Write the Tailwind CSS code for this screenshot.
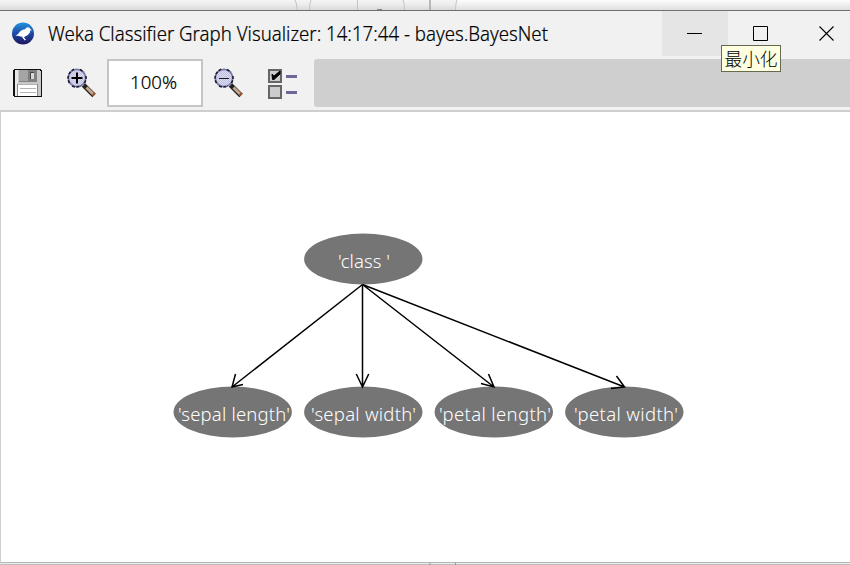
<!DOCTYPE html>
<html lang="en">
<head>
<meta charset="utf-8">
<title>Weka Classifier Graph Visualizer</title>
<script src="https://cdn.jsdelivr.net/npm/@tailwindcss/browser@4"></script>
</head>
<body class="w-[850px] h-[565px] overflow-hidden bg-[#f1f1f1] font-['Noto_Sans','Noto_Sans_CJK_SC',sans-serif] text-black">
<div class="relative flex flex-col w-[850px] h-[565px]">
  <!-- window behind -->
  <svg class="block shrink-0" width="850" height="10" viewBox="0 0 850 10">
    <defs><linearGradient id="top" x1="0" y1="0" x2="0" y2="1"><stop offset="0" stop-color="#f4f4f5"/><stop offset=".4" stop-color="#eeeeef"/><stop offset="1" stop-color="#d9d9da"/></linearGradient>
    <linearGradient id="right" x1="0" y1="0" x2="0" y2="1"><stop offset="0" stop-color="#fdfdfd"/><stop offset="1" stop-color="#dfdfdf"/></linearGradient></defs>
    <rect width="850" height="10" fill="url(#top)"/>
    <path d="M455 10V4L457 0H850V10Z" fill="url(#right)"/>
    <path d="M295 0Q297 3 297 10M311 0Q309.500 3 309.500 10M357.500 0V10M403 0Q404.500 3 404.500 10M457 0Q455.500 3 455.500 10" fill="none" stroke="#c3c3c5"/>
    <path d="M430 0V10" stroke="#a6a6a8" stroke-width="1.500"/><path d="M377 9.500H382" stroke="#888"/>
  </svg>
  <header class="flex shrink-0 h-[46px] border-t border-[#717171] bg-[#f1f1f1]">
    <div class="flex w-[662px] items-center pl-3">
      <svg class="block shrink-0" width="23" height="23" viewBox="0 0 23 23">
        <defs><linearGradient id="logo" x1="0" y1="0" x2="0" y2="1"><stop offset="0" stop-color="#2493df"/><stop offset=".5" stop-color="#1b4aa5"/><stop offset="1" stop-color="#20145b"/></linearGradient></defs>
        <circle cx="11" cy="11.500" r="11" fill="url(#logo)"/>
        <path d="M3.500 14L6 12L8.500 9Q10.500 7.300 13 7.300Q14 5.300 16 5.300Q18 5.500 18.200 7L20 8.300L18.300 8.500Q18.300 11.500 15.500 13.300L13 14.500L12 15.700L14 17.600L12.800 18.500L10.300 15.600L10.500 14.700Q8 14.700 6.500 13.700Z" fill="#fff"/>
      </svg>
      <svg class="block shrink-0 ml-3 overflow-visible" width="504" height="34"><text x="1" y="24" font-size="19.500" font-weight="300" stroke="#000" stroke-width=".2" textLength="500" lengthAdjust="spacingAndGlyphs">Weka Classifier Graph Visualizer: 14:17:44 - bayes.BayesNet</text></svg>
    </div>
    <div class="flex w-[66px] items-center justify-center bg-[#e5e5e5]"><svg width="16" height="16"><path d="M0 7.500H15" stroke="#000"/></svg></div>
    <div class="flex w-[66px] items-center justify-center"><svg width="16" height="16"><path d="M.5 .5H14.500V14.500H.5Z" fill="none" stroke="#000"/></svg></div>
    <div class="flex w-[56px] items-center pl-[25px]"><svg width="16" height="16"><path d="M.5 .5L14.500 14.500M14.500 .5L.5 14.500" fill="none" stroke="#000" stroke-width="1.100"/></svg></div>
  </header>
  <div class="flex shrink-0 h-[54px] items-start bg-[#f1f1f1]">
    <svg class="block shrink-0 mt-[13px] ml-[13px]" width="29" height="28" viewBox="0 0 29 28" shape-rendering="crispEdges">
      <path d="M1 0H27L29 2V28H1L0 27V1Z" fill="#111"/>
      <path d="M2 1H26L28 3V27H2Z" fill="#c8c8c8"/>
      <path d="M2 1H5V27H2Z" fill="#e8e8e8"/><path d="M6 1H24V13H6Z" fill="#808080"/><path d="M6 1H15V12H6Z" fill="#a5a5a5"/><path d="M17 3H21V10H17Z" fill="#444"/><path d="M18 4H21V10H18Z" fill="#d9d9d9"/>
      <path d="M5 15H25V27H5Z" fill="#fff"/><path d="M5 15.500H25M7 19.500H23M7 23.500H23" stroke="#b3b3b3"/><path d="M4.500 15V27M24.500 15V27" stroke="#888"/>
    </svg>
    <svg class="block shrink-0 mt-[12px] ml-[25px]" width="31" height="31" viewBox="0 0 31 31">
      <defs><pattern id="glass" width="2" height="2" patternUnits="userSpaceOnUse"><rect width="2" height="2" fill="#dcdcf0"/><path d="M0 0H1V1H0ZM1 1H2V2H1Z" fill="#bfc0df"/></pattern></defs>
      <path d="M16.500 17L27 27.500" stroke="#222" stroke-width="4.800"/><path d="M19.500 19.500L27 27" stroke="#c9a78c" stroke-width="3"/><path d="M25.500 27.500L28 25" stroke="#9a5127" stroke-width="2"/>
      <circle cx="10" cy="10" r="8.700" fill="url(#glass)" stroke="#777aaa" stroke-width="1.700"/><path d="M2.500 15A9 9 0 0 1 2 6Q4 2 8 1M13 1.500L17 4M19 8V12L17 16M5 18Q9 20 14 18" fill="none" stroke="#17182d" stroke-width="1.500" stroke-dasharray="3 1.500"/>
      <path d="M10 4.500V15.500M4.500 10H15.500" stroke="#000" stroke-width="2"/>
    </svg>
    <div class="shrink-0 w-[96px] h-[48px] mt-[3px] ml-[9px] border-2 border-[#c5c5c5] bg-white">
      <svg class="block" width="92" height="44"><text x="21" y="28" font-size="19" font-weight="300" stroke="#000" stroke-width=".2" textLength="47" lengthAdjust="spacingAndGlyphs">100%</text></svg>
    </div>
    <svg class="block shrink-0 mt-[12px] ml-[11px]" width="31" height="31" viewBox="0 0 31 31">
      <path d="M16.500 17L27 27.500" stroke="#222" stroke-width="4.800"/><path d="M19.500 19.500L27 27" stroke="#c9a78c" stroke-width="3"/><path d="M25.500 27.500L28 25" stroke="#9a5127" stroke-width="2"/>
      <circle cx="10" cy="10" r="8.700" fill="url(#glass)" stroke="#777aaa" stroke-width="1.700"/><path d="M2.500 15A9 9 0 0 1 2 6Q4 2 8 1M13 1.500L17 4M19 8V12L17 16M5 18Q9 20 14 18" fill="none" stroke="#17182d" stroke-width="1.500" stroke-dasharray="3 1.500"/>
      <path d="M5 10.500H15" stroke="#17182d"/>
    </svg>
    <svg class="block shrink-0 mt-[12px] ml-[23px]" width="31" height="32" viewBox="0 0 31 32">
      <path d="M1 2H13V14H1ZM1 18H13V30H1Z" fill="#ccc" stroke="#666" stroke-width="2"/>
      <path d="M4 6L6 8L12 3V6L6 11.500H4.500Z" fill="#000" stroke="#000"/><path d="M18 8.500H29M18 24.500H29" stroke="#6c6899" stroke-width="3"/>
    </svg>
    <div class="grow h-[48px] mt-[3px] ml-[15px] rounded-l-[3px] bg-[#cfcfcf]"></div>
  </div>
  <main class="shrink-0 h-[453px] border-t-2 border-b border-l border-t-[#cecece] border-b-[#b5b5b5] border-l-[#cecece] bg-white">
    <svg class="block" width="849" height="450" viewBox="1 112 849 450">
      <g fill="#757575"><ellipse cx="363.300" cy="259" rx="59.200" ry="25.500"/><ellipse cx="232.700" cy="412" rx="59.200" ry="25.500"/><ellipse cx="363.300" cy="412" rx="59.200" ry="25.500"/><ellipse cx="493.800" cy="412" rx="59.200" ry="25.500"/><ellipse cx="624.300" cy="412" rx="59.200" ry="25.500"/></g>
      <path d="M362.500 284.500L232 387M362.500 284.500V387M362.500 284.500L494 387M362.500 284.500L624.500 387M235.500 374L232 387L243 384.500M356.300 374L362.500 387L368.700 374M488.500 374L494 387L481 383.500M616.500 376L624.500 387L611 388.500" fill="none" stroke="#000" stroke-width="1.500"/>
      <g fill="#fff" font-size="18.500" font-weight="300">
        <text x="338" y="268" textLength="52">'class '</text>
        <text x="178" y="421" textLength="112">'sepal length'</text>
        <text x="311" y="421" textLength="105">'sepal width'</text>
        <text x="439" y="421" textLength="112">'petal length'</text>
        <text x="574" y="421" textLength="104">'petal width'</text>
      </g>
    </svg>
  </main>
  <svg class="block shrink-0" width="850" height="2"><path d="M0 .5H850" stroke="#eee"/><path d="M0 1.500H850" stroke="#bbb"/><path d="M430 0V2M455.500 0V2" stroke="#929292"/></svg>
  <div class="absolute left-[721px] top-[45px] w-[60px] h-[27px] border border-[#666b50] bg-[#ffffe1]">
    <svg class="block overflow-visible" width="58" height="25"><text x="2.500" y="19.500" font-size="17.700" font-weight="300" fill="#000" font-family="Noto Sans CJK SC, sans-serif" textLength="53">最小化</text></svg>
  </div>
</div>
</body>
</html>
